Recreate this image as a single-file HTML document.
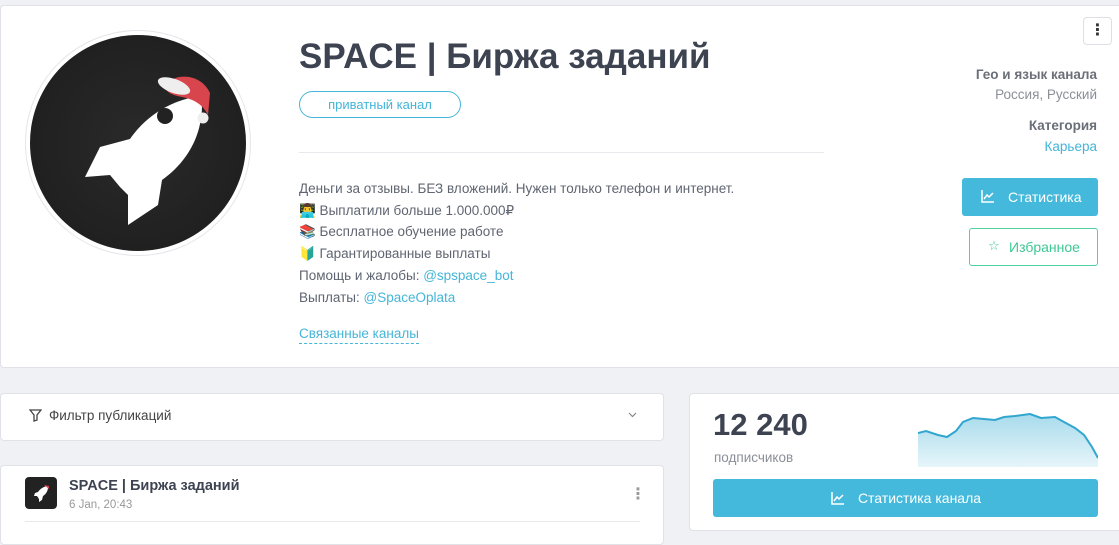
<!DOCTYPE html>
<html><head><meta charset="utf-8"><style>
*{box-sizing:border-box;margin:0;padding:0}
body{width:1119px;height:533px;overflow:hidden;background:#f0f1f5;font-family:"Liberation Sans","DejaVu Sans",sans-serif;color:#555b66;position:relative}
.card{position:absolute;background:#fff;border:1px solid #e0e2e8;border-radius:4px}
.abs{position:absolute}
</style></head><body>
<div class="card" style="left:0;top:5px;width:1125px;height:363px;border-radius:4px"></div>
<div class="abs" style="left:25px;top:30px;width:226px;height:226px;border-radius:50%;border:1px solid #e4e6ea;background:#fff"></div>
<div class="abs" style="left:30px;top:35px;width:216px;height:216px;border-radius:50%;background:radial-gradient(circle,#2a2a2a,#1c1c1c)"></div>
<svg class="abs" style="left:30px;top:35px" width="216" height="216" viewBox="0 0 216 216">
<path d="M165 62 C140 66 115 82 100 104 L70 112 L55 142 L80 140 L90 152 L98 160 L98 190 L128 170 L132 145 C156 128 172 102 172 70 Z" fill="#fff"/>
<circle cx="135" cy="81" r="8" fill="#222"/>
<path d="M134 50 C148 36 172 40 180 58 L178 80 C172 68 162 64 152 62 C142 60 136 58 134 50Z" fill="#d8454c"/>
<ellipse cx="144" cy="51" rx="17" ry="7" fill="#eee" transform="rotate(20 144 51)"/>
<circle cx="173" cy="83" r="5.5" fill="#eee"/>
</svg>
<div class="abs" style="left:299px;top:37px;font-size:35px;font-weight:bold;color:#3d4350">SPACE | Биржа заданий</div>
<div class="abs" style="left:299px;top:91px;width:162px;height:27px;border:1px solid #45b5d8;border-radius:14px;color:#45b5d8;font-size:13px;text-align:center;line-height:25px">приватный канал</div>
<div class="abs" style="left:299px;top:152px;width:525px;height:1px;background:#e8e9ed"></div>
<div class="abs" style="left:299px;top:178px;font-size:13.5px;line-height:21.7px;color:#5f6570">
Деньги за отзывы. БЕЗ вложений. Нужен только телефон и интернет.<br>
👨‍💻 Выплатили больше 1.000.000₽<br>
📚 Бесплатное обучение работе<br>
🔰 Гарантированные выплаты<br>
Помощь и жалобы: <span style="color:#45b5d8">@spspace_bot</span><br>
Выплаты: <span style="color:#45b5d8">@SpaceOplata</span></div>
<div class="abs" style="left:299px;top:325px;font-size:13.5px;color:#45b5d8;border-bottom:1px dashed #45b5d8;line-height:18px">Связанные каналы</div>
<div class="abs" style="left:1083px;top:17px;width:29px;height:28px;border:1px solid #dcdfe4;border-radius:4px;text-align:center;color:#333;font-size:16px;line-height:26px;font-weight:bold">⋮</div>
<div class="abs" style="right:22px;top:65px;text-align:right;font-size:13.5px;line-height:20px">
<b style="color:#6a6f78">Гео и язык канала</b><br><span style="color:#8a8f98">Россия, Русский</span></div>
<div class="abs" style="right:22px;top:115px;text-align:right;font-size:13.5px;line-height:21px">
<b style="color:#6a6f78">Категория</b><br><span style="color:#45b5d8">Карьера</span></div>
<div class="abs" style="left:962px;top:178px;width:136px;height:38px;background:#45b9db;border-radius:3px;color:#fff;font-size:14px;line-height:38px;padding-left:46px">Статистика</div>
<svg class="abs" style="left:981px;top:189px" width="14" height="14"><path d="M1 1V13H13M3 10L6 6L8 8L12 4" stroke="#fff" stroke-width="1.5" fill="none"/></svg>
<div class="abs" style="left:969px;top:228px;width:129px;height:38px;border:1px solid #4fd1a0;border-radius:3px;color:#3ec893;font-size:14px;line-height:36px;padding-left:39px">Избранное</div>
<div class="abs" style="left:988px;top:238px;color:#3ec893;font-size:13px">☆</div>

<div class="card" style="left:0;top:393px;width:664px;height:48px"></div>
<svg class="abs" style="left:29px;top:409px" width="13" height="13"><path d="M1 1H12L8 6V11L5 12V6Z" stroke="#444" stroke-width="1.3" fill="none"/></svg>
<div class="abs" style="left:49px;top:408px;font-size:13.5px;color:#444">Фильтр публикаций</div>
<svg class="abs" style="left:628px;top:412px" width="9" height="6"><path d="M1 1L4.5 4.5L8 1" stroke="#888" stroke-width="1.2" fill="none"/></svg>
<div class="card" style="left:0;top:465px;width:664px;height:80px"></div>
<div class="abs" style="left:25px;top:477px;width:32px;height:32px;border-radius:4px;background:#222"></div>
<svg class="abs" style="left:25px;top:477px" width="32" height="32"><path d="M22 9C18 10 15 12 13 15L10 16L9 19L12 19L14 22L14 25L17 23L18 19C21 17 23 14 23 10Z" fill="#fff"/><path d="M19 8L24 9L24 12Z" fill="#d8454c"/></svg>
<div class="abs" style="left:69px;top:478px;font-size:14.5px;font-weight:bold;color:#3d4350">SPACE | Биржа заданий</div>
<div class="abs" style="left:69px;top:499px;font-size:11.5px;color:#999">6 Jan, 20:43</div>
<div class="abs" style="left:630px;top:484px;font-size:16px;color:#999;font-weight:bold">⋮</div>
<div class="abs" style="left:25px;top:521px;width:615px;height:1px;background:#e8e9ed"></div>

<div class="card" style="left:689px;top:393px;width:440px;height:138px"></div>
<div class="abs" style="left:713px;top:407px;font-size:31px;font-weight:bold;color:#3d4350">12 240</div>
<div class="abs" style="left:714px;top:450px;font-size:13.5px;color:#8a8f98">подписчиков</div>
<svg class="abs" style="left:918px;top:413px" width="180" height="54" viewBox="0 0 180 54">
<defs><linearGradient id="g" x1="0" y1="0" x2="0" y2="1"><stop offset="0" stop-color="#a8dbec"/><stop offset="1" stop-color="#e6f5fa"/></linearGradient></defs>
<path d="M0 20L8 18L20 22L29 24L38 18L45 9L55 5L66 6L77 7L86 4L97 3L112 1L123 5L137 4L146 9L157 15L166 22L174 34L180 45V54H0Z" fill="url(#g)"/>
<path d="M0 20L8 18L20 22L29 24L38 18L45 9L55 5L66 6L77 7L86 4L97 3L112 1L123 5L137 4L146 9L157 15L166 22L174 34L180 45" stroke="#31a6cf" stroke-width="2" fill="none"/>
</svg>
<div class="abs" style="left:713px;top:479px;width:385px;height:38px;background:#45b9db;border-radius:3px;color:#fff;font-size:14px;line-height:38px;text-align:center;padding-left:28px">Статистика канала</div>
<svg class="abs" style="left:831px;top:491px" width="14" height="14"><path d="M1 1V13H13M3 10L6 6L8 8L12 4" stroke="#fff" stroke-width="1.5" fill="none"/></svg>
</body></html>
